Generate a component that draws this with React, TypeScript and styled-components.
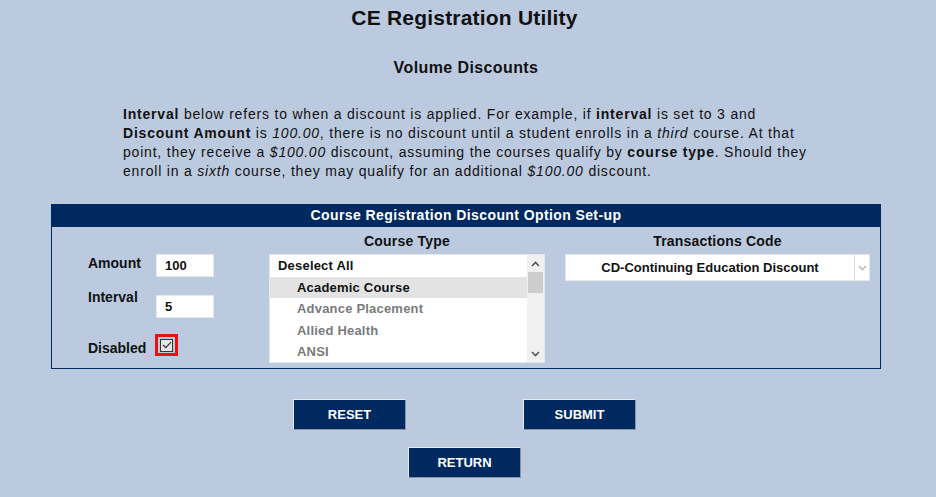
import * as React from 'react'
import styled, { createGlobalStyle } from 'styled-components'

const NAVY = '#00295f'
const PAGE_BG = '#bccae0'

const GlobalStyle = createGlobalStyle`
    html, body {
        margin: 0;
        padding: 0;
        background: ${PAGE_BG};
        font-family: "Liberation Sans", Arial, sans-serif;
        color: #111;
    }
`

const Page = styled.div`
    width: 932px;
    min-height: 497px;
    display: flex;
    flex-direction: column;
    align-items: center;
`

const Title = styled.h1`
    margin: 5px 3px 0 0;
    font-size: 21px;
    line-height: 25px;
    font-weight: bold;
    letter-spacing: 0.2px;
`

const SubTitle = styled.h2`
    margin: 28px 0 0;
    font-size: 16px;
    line-height: 20px;
    font-weight: bold;
    letter-spacing: 0.4px;
`

const Intro = styled.p`
    width: 686px;
    margin: 27px 0 0;
    font-size: 14px;
    line-height: 19px;
    letter-spacing: 0.8px;
    white-space: nowrap;
`

const Panel = styled.section`
    width: 830px;
    box-sizing: border-box;
    margin-top: 23px;
    border: 1px solid ${NAVY};
    border-top: none;
`

const PanelHeader = styled.div`
    height: 23px;
    background: ${NAVY};
    color: #fff;
    font-size: 14px;
    font-weight: bold;
    line-height: 23px;
    text-align: center;
    letter-spacing: 0.4px;
`

const PanelBody = styled.div`
    display: grid;
    grid-template-columns: 217px 276px 20px 305px;
    grid-template-areas:
        ". course-head . trans-head"
        "fields course . trans";
    padding: 6px 10px 5px 0;
`

const ColumnHead = styled.div<{ $area: string }>`
    grid-area: ${p => p.$area};
    text-align: center;
    font-size: 14px;
    font-weight: bold;
    line-height: 16px;
    margin-bottom: 5px;
    letter-spacing: 0.2px;
`

const Fields = styled.div`
    grid-area: fields;
    padding-left: 36px;
    display: grid;
    grid-template-columns: 68px auto;
    align-items: start;
    align-content: start;
`

const Label = styled.span<{ $top: number }>`
    font-size: 14px;
    font-weight: bold;
    line-height: 16px;
    margin-top: ${p => p.$top}px;
`

const TextBox = styled.div<{ $top: number }>`
    width: 58px;
    height: 23px;
    box-sizing: border-box;
    margin-top: ${p => p.$top}px;
    background: #fff;
    border: 1px solid #e4e8ee;
    padding-left: 8px;
    font-size: 13px;
    font-weight: bold;
    line-height: 22px;
`

const CheckFrame = styled.div<{ $top: number }>`
    width: 23px;
    height: 22px;
    box-sizing: border-box;
    margin: ${p => p.$top}px 0 0 -1px;
    border: 3px solid #ee1111;
    display: flex;
    align-items: center;
    justify-content: center;
`

const CheckBox = styled.div`
    width: 13px;
    height: 13px;
    box-sizing: border-box;
    border: 1px solid #333;
    background: #e6e6e6;
    display: flex;
    align-items: center;
    justify-content: center;
`

const ListBox = styled.div`
    grid-area: course;
    height: 109px;
    box-sizing: border-box;
    background: #fff;
    border: 1px solid #e4e8ee;
    display: flex;
`

const ListItems = styled.div`
    flex: 1;
    overflow: hidden;
`

const ListItem = styled.div<{ $indent?: boolean; $selected?: boolean; $muted?: boolean }>`
    height: 21.5px;
    line-height: 21.5px;
    padding-left: ${p => (p.$indent ? 27 : 8)}px;
    font-size: 13px;
    font-weight: bold;
    letter-spacing: 0.2px;
    white-space: nowrap;
    background: ${p => (p.$selected ? '#e3e3e3' : 'transparent')};
    color: ${p => (p.$muted ? '#7a7a7a' : '#111')};
`

const ScrollTrack = styled.div`
    width: 17px;
    background: #f0f0f0;
    display: flex;
    flex-direction: column;
    align-items: center;
`

const ScrollArrow = styled.div`
    height: 17px;
    width: 17px;
    display: flex;
    align-items: center;
    justify-content: center;
`

const ScrollThumb = styled.div`
    width: 15px;
    height: 21px;
    background: #cdcdcd;
`

const ScrollSpace = styled.div`
    flex: 1;
`

const Select = styled.div`
    grid-area: trans;
    height: 27px;
    box-sizing: border-box;
    background: #fff;
    border: 1px solid #e4e8ee;
    display: flex;
`

const SelectValue = styled.div`
    flex: 1;
    text-align: center;
    font-size: 13px;
    font-weight: bold;
    line-height: 26px;
`

const SelectArrow = styled.div`
    width: 14px;
    border-left: 1px solid #dcdcdc;
    display: flex;
    align-items: center;
    justify-content: center;
`

const ButtonRow = styled.div<{ $gap: number; $top: number }>`
    display: flex;
    gap: ${p => p.$gap}px;
    margin: ${p => p.$top}px 3px 0 0;
`

const Button = styled.button`
    width: 113px;
    height: 31px;
    box-sizing: border-box;
    background: ${NAVY};
    color: #fff;
    font-family: "Liberation Sans", Arial, sans-serif;
    font-size: 13px;
    font-weight: bold;
    border: 1px solid;
    border-color: #e8ecf2 #8a93a3 #8a93a3 #e8ecf2;
    padding: 0;
    cursor: pointer;
`

const Chevron = ({ up = false, color = '#555' }: { up?: boolean; color?: string }) => (
    <svg width="9" height="6" viewBox="0 0 9 6">
        <path d={up ? 'M1 5 L4.5 1.5 L8 5' : 'M1 1 L4.5 4.5 L8 1'} fill="none" stroke={color} strokeWidth="1.6" />
    </svg>
)

const courseTypes = ['Advance Placement', 'Allied Health', 'ANSI']

export default function App(): React.ReactElement {
    return (
        <Page>
            <GlobalStyle />
            <Title>CE Registration Utility</Title>
            <SubTitle>Volume Discounts</SubTitle>
            <Intro>
                <b>Interval</b> below refers to when a discount is applied. For example, if <b>interval</b> is set to 3 and<br />
                <b>Discount Amount</b> is <i>100.00</i>, there is no discount until a student enrolls in a <i>third</i> course. At that<br />
                point, they receive a <i>$100.00</i> discount, assuming the courses qualify by <b>course type</b>. Should they<br />
                enroll in a <i>sixth</i> course, they may qualify for an additional <i>$100.00</i> discount.
            </Intro>

            <Panel>
                <PanelHeader>Course Registration Discount Option Set-up</PanelHeader>
                <PanelBody>
                    <ColumnHead $area="course-head">Course Type</ColumnHead>
                    <ColumnHead $area="trans-head">Transactions Code</ColumnHead>
                    <Fields>
                        <Label $top={1}>Amount</Label>
                        <TextBox $top={0}>100</TextBox>
                        <Label $top={12}>Interval</Label>
                        <TextBox $top={18}>5</TextBox>
                        <Label $top={22}>Disabled</Label>
                        <CheckFrame $top={16}>
                            <CheckBox>
                                <svg width="10" height="8" viewBox="0 0 10 8">
                                    <path d="M1 4 L3.8 6.6 L9 1.2" fill="none" stroke="#333" strokeWidth="1.2" />
                                </svg>
                            </CheckBox>
                        </CheckFrame>
                    </Fields>
                    <ListBox>
                        <ListItems>
                            <ListItem>Deselect All</ListItem>
                            <ListItem $indent $selected>Academic Course</ListItem>
                            {courseTypes.map((c: string) => (
                                <ListItem $indent $muted key={c}>{c}</ListItem>
                            ))}
                        </ListItems>
                        <ScrollTrack>
                            <ScrollArrow><Chevron up /></ScrollArrow>
                            <ScrollThumb />
                            <ScrollSpace />
                            <ScrollArrow><Chevron /></ScrollArrow>
                        </ScrollTrack>
                    </ListBox>
                    <Select>
                        <SelectValue>CD-Continuing Education Discount</SelectValue>
                        <SelectArrow><Chevron color="#bbb" /></SelectArrow>
                    </Select>
                </PanelBody>
            </Panel>

            <ButtonRow $gap={117} $top={30}>
                <Button>RESET</Button>
                <Button>SUBMIT</Button>
            </ButtonRow>
            <ButtonRow $gap={0} $top={17}>
                <Button>RETURN</Button>
            </ButtonRow>
        </Page>
    )
}
